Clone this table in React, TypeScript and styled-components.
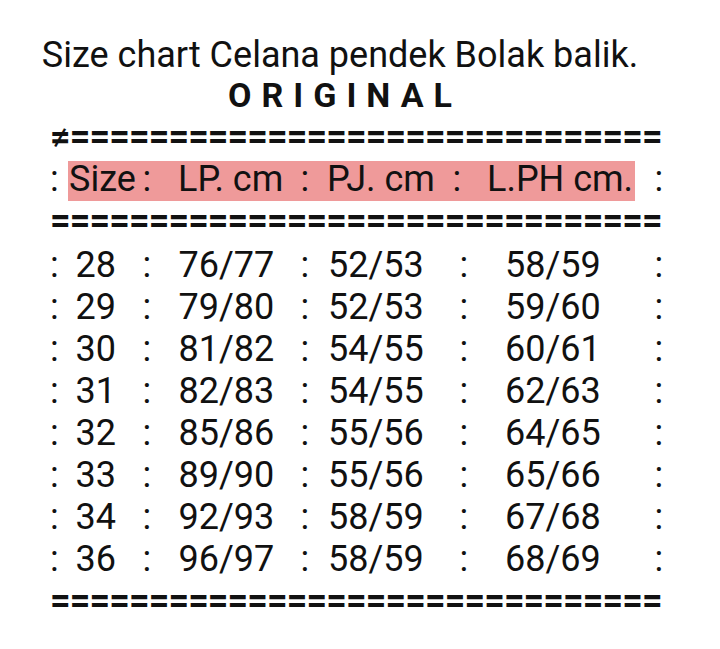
import React from "react";
import styled, { createGlobalStyle } from "styled-components";

const GlobalStyle = createGlobalStyle`
  html, body {
    margin: 0;
    padding: 0;
    background: #ffffff;
  }
  body {
    font-family: Roboto, "Noto Sans", "Liberation Sans", Arial, sans-serif;
    color: #111111;
  }
`;

const Page = styled.main`
  width: 720px;
  height: 649px;
  box-sizing: border-box;
  padding-top: 35px;
  overflow: hidden;
  background: #ffffff;
`;

const Heading = styled.header`
  width: 680px;
  text-align: center;
`;

const Title = styled.h1`
  margin: 0;
  font-size: 36px;
  font-weight: 400;
  line-height: 40px;
`;

const Subtitle = styled.h2`
  margin: 0;
  font-size: 34px;
  font-weight: 700;
  line-height: 40px;
  letter-spacing: 10px;
  padding-left: 10px;
`;

const Chart = styled.section`
  padding-left: 50px;
  font-size: 36px;
  line-height: 42px;
`;

const Rule = styled.div<{ $gap?: number }>`
  margin-top: ${(p) => p.$gap ?? 0}px;
  white-space: pre;
  height: 42px;
  font-weight: 700;
  letter-spacing: -0.92px;
`;

const Grid = styled.div<{ $gap?: number }>`
  display: grid;
  grid-template-columns: 25.5px 67px 36px 122px 27.5px 131.5px 45.5px 149.5px auto;
  margin-top: ${(p) => p.$gap ?? 0}px;
  white-space: pre;
`;

const Highlight = styled.div`
  grid-column: 2 / 9;
  grid-row: 1;
  margin: 3px 19.5px -1px -7.5px;
  background: #ef9a9a;
`;

const Cell = styled.span<{ $col: number; $shift?: number }>`
  grid-column: ${(p) => p.$col};
  margin-left: ${(p) => p.$shift ?? 0}px;
  height: 42px;
`;

const HeadCell = styled(Cell)`
  grid-row: 1;
`;

const rows: [string, string, string, string][] = [
  ["28", "76/77", "52/53", "58/59"],
  ["29", "79/80", "52/53", "59/60"],
  ["30", "81/82", "54/55", "60/61"],
  ["31", "82/83", "54/55", "62/63"],
  ["32", "85/86", "55/56", "64/65"],
  ["33", "89/90", "55/56", "65/66"],
  ["34", "92/93", "58/59", "67/68"],
  ["36", "96/97", "58/59", "68/69"],
];

const header: { text: string; shift: number }[] = [
  { text: ":", shift: 0 },
  { text: "Size", shift: -6.5 },
  { text: ":", shift: 0 },
  { text: "LP. cm", shift: -0.5 },
  { text: ":", shift: 0 },
  { text: "PJ. cm", shift: -1 },
  { text: ":", shift: -7 },
  { text: "L.PH cm.", shift: -18 },
  { text: ":", shift: 0 },
];

export default function App() {
  return (
    <Page>
      <GlobalStyle />
      <Heading>
        <Title>Size chart Celana pendek Bolak balik.</Title>
        <Subtitle>ORIGINAL</Subtitle>
      </Heading>
      <Chart>
        <Rule $gap={1}>{"≠" + "=".repeat(30)}</Rule>
        <Grid>
          <Highlight />
          {header.map((h, i) => (
            <HeadCell key={i} $col={i + 1} $shift={h.shift}>
              {h.text}
            </HeadCell>
          ))}
        </Grid>
        <Rule>{"=".repeat(31)}</Rule>
        <Grid $gap={2}>
          {rows.map((r) => (
            <React.Fragment key={r[0]}>
              <Cell $col={1}>:</Cell>
              <Cell $col={2}>{r[0]}</Cell>
              <Cell $col={3}>:</Cell>
              <Cell $col={4}>{r[1]}</Cell>
              <Cell $col={5}>:</Cell>
              <Cell $col={6}>{r[2]}</Cell>
              <Cell $col={7}>:</Cell>
              <Cell $col={8}>{r[3]}</Cell>
              <Cell $col={9}>:</Cell>
            </React.Fragment>
          ))}
        </Grid>
        <Rule>{"=".repeat(31)}</Rule>
      </Chart>
    </Page>
  );
}
